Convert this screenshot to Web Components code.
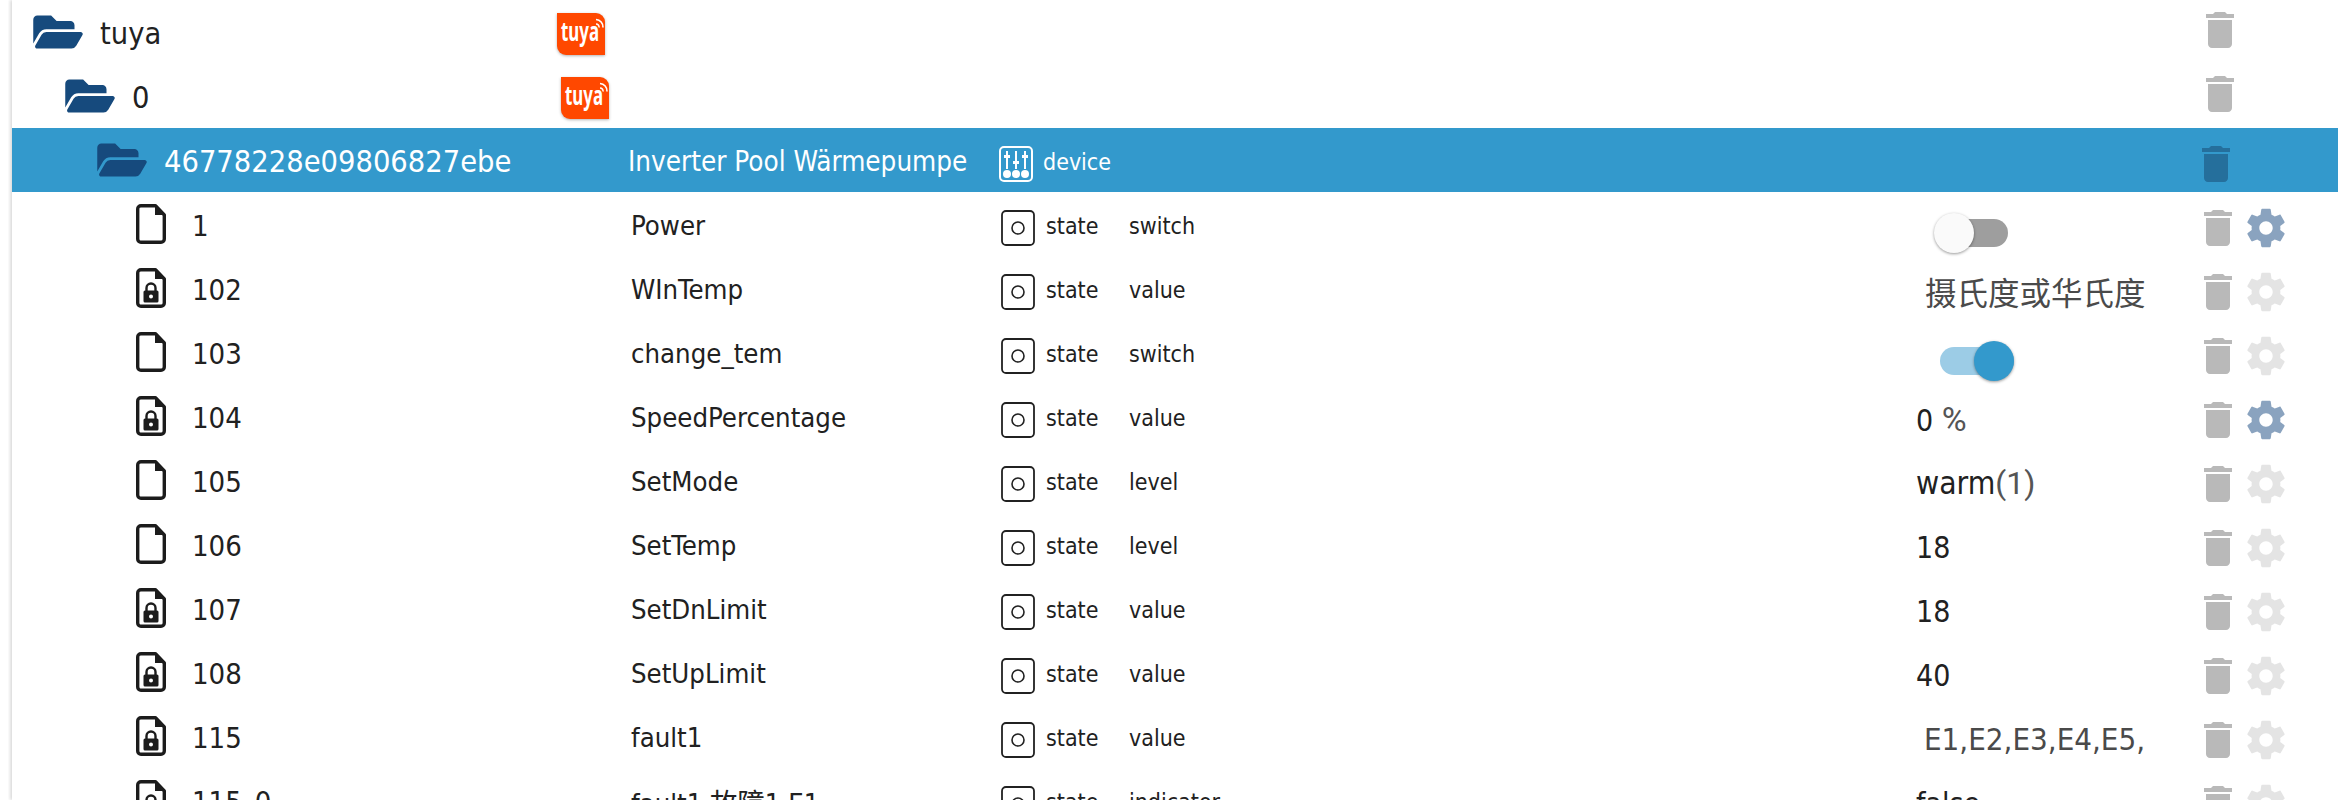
<!DOCTYPE html>
<html>
<head>
<meta charset="utf-8">
<title>objects</title>
<style>
  html, body { margin: 0; padding: 0; height: 800px; overflow: hidden; background: #fff; }
  body { font-family: "DejaVu Sans", "Noto Sans CJK SC", sans-serif; font-stretch: condensed; color: #212121; }
  .gray { color: #555; font-family: Roboto, sans-serif; font-stretch: normal; }
</style>
</head>
<body>

<object-tree>
  <tree-row level="0" kind="folder" label="tuya"><tuya-logo slot="name"></tuya-logo></tree-row>
  <tree-row level="1" kind="folder" label="0"><tuya-logo slot="name" style="margin-left:4px"></tuya-logo></tree-row>
  <tree-row level="2" kind="folder" label="46778228e09806827ebe" name="Inverter Pool Wärmepumpe" type="device" selected></tree-row>
  <tree-row kind="file" label="1" name="Power" type="state" role-name="switch" cog><toggle-switch slot="value"></toggle-switch></tree-row>
  <tree-row kind="lock" label="102" name="WInTemp" type="state" role-name="value" gear-off><span slot="value" style="margin-left:9px;color:#4a4a4a;font-size:31.5px;font-family:'Noto Sans CJK SC',sans-serif">摄氏度或华氏度</span></tree-row>
  <tree-row kind="file" label="103" name="change_tem" type="state" role-name="switch" gear-off><toggle-switch slot="value" on></toggle-switch></tree-row>
  <tree-row kind="lock" label="104" name="SpeedPercentage" type="state" role-name="value" cog><span slot="value">0 <span class="gray" style="font-size:34px">%</span></span></tree-row>
  <tree-row kind="file" label="105" name="SetMode" type="state" role-name="level" gear-off><span slot="value"><span style="font-size:31.5px">warm</span><span class="gray" style="font-size:32px">(1)</span></span></tree-row>
  <tree-row kind="file" label="106" name="SetTemp" type="state" role-name="level" gear-off><span slot="value">18</span></tree-row>
  <tree-row kind="lock" label="107" name="SetDnLimit" type="state" role-name="value" gear-off><span slot="value">18</span></tree-row>
  <tree-row kind="lock" label="108" name="SetUpLimit" type="state" role-name="value" gear-off><span slot="value">40</span></tree-row>
  <tree-row kind="lock" label="115" name="fault1" type="state" role-name="value" gear-off><span slot="value" style="display:block;margin-left:8px;width:220px;overflow:hidden;white-space:nowrap;color:#4a4a4a;font-size:31px">E1,E2,E3,E4,E5,</span></tree-row>
  <tree-row kind="lock" label="115_0" name="fault1 故障1 E1" type="state" role-name="indicator" gear-off><span slot="value">false</span></tree-row>
</object-tree>

<script>
// icon paths
const FILE_OUTLINE = '<path fill="none" stroke="#1c1c1c" stroke-width="3.400" stroke-linejoin="round" d="M5 1.700h14.500l8.800 9.300v24a3.300 3.300 0 0 1-3.300 3.300H5A3.300 3.300 0 0 1 1.700 35V5A3.300 3.300 0 0 1 5 1.700z"/><path fill="#1c1c1c" d="M19 2l9 9h-9z"/>';
const ICONS = {
  folder: '<svg width="50" height="44" viewBox="0 0 576 512"><path fill="#164a7d" d="M572.694 292.093L500.27 416.248A63.997 63.997 0 0 1 444.989 448H45.025c-18.523 0-30.064-20.093-20.731-36.093l72.424-124.155A64 64 0 0 1 152 256h399.964c18.523 0 30.064 20.093 20.73 36.093zM152 224h328v-48c0-26.51-21.49-48-48-48H272l-64-64H48C21.49 64 0 85.49 0 112v278.046l69.077-118.418C86.214 242.25 117.989 224 152 224z"/></svg>',
  file: `<svg width="30" height="40" viewBox="0 0 30 40">${FILE_OUTLINE}</svg>`,
  lock: `<svg width="30" height="40" viewBox="0 0 30 40">${FILE_OUTLINE}<path fill="none" stroke="#1c1c1c" stroke-width="2.400" d="M10.500 23v-3a4.500 4.500 0 0 1 9 0v3"/><path fill="#1c1c1c" fill-rule="evenodd" d="M9 22.500h12a1.500 1.500 0 0 1 1.500 1.500v9a1.500 1.500 0 0 1-1.500 1.500H9A1.500 1.500 0 0 1 7.500 33v-9A1.500 1.500 0 0 1 9 22.500zM15 26.500a2 2 0 1 0 0 4 2 2 0 0 0 0-4z"/></svg>`,
  state: '<svg width="34" height="36" viewBox="0 0 34 36"><rect x="1" y="1" width="32" height="34" rx="4" fill="none" stroke="#212121" stroke-width="1.800"/><circle cx="17" cy="18" r="6" fill="none" stroke="#212121" stroke-width="1.600"/></svg>',
  device: '<svg width="34" height="36" viewBox="0 0 34 36" fill="#fff" stroke="#fff"><rect x="1" y="1" width="32" height="34" rx="4" fill="none" stroke-width="2"/><path fill="none" stroke-width="2" d="M8 5v18M17 5v18M26 5v18"/><path stroke="none" d="M5 9h6v3H5zM14 15h6v3h-6zM23 9h6v3h-6z"/><g stroke="none"><circle cx="8" cy="28" r="4"/><circle cx="17" cy="28" r="4"/><circle cx="26" cy="28" r="4"/></g></svg>'
};

const TRASH = '<svg width="48" height="48" viewBox="0 0 24 24"><path fill="currentColor" d="M6 19c0 1.100.9 2 2 2h8c1.100 0 2-.9 2-2V7H6v12zM19 4h-3.500l-1-1h-5l-1 1H5v2h14V4z"/></svg>';
const GEAR = '<svg width="46" height="46" viewBox="0 0 24 24"><path fill="currentColor" d="M19.43 12.98c.04-.32.07-.64.07-.98s-.03-.66-.07-.98l2.110-1.650c.19-.15.24-.42.12-.64l-2-3.460c-.12-.22-.39-.3-.61-.22l-2.490 1c-.52-.4-1.080-.73-1.690-.98l-.38-2.650C14.460 2.180 14.250 2 14 2h-4c-.25 0-.46.18-.49.42l-.38 2.650c-.61.25-1.170.59-1.690.98l-2.490-1c-.23-.09-.49 0-.61.22l-2 3.460c-.13.22-.07.49.12.64l2.110 1.650c-.04.32-.07.65-.07.98s.03.66.07.98l-2.110 1.650c-.19.15-.24.42-.12.64l2 3.460c.12.22.39.3.61.22l2.490-1c.52.4 1.080.73 1.690.98l.38 2.650c.03.24.24.42.49.42h4c.25 0 .46-.18.49-.42l.38-2.650c.61-.25 1.170-.59 1.690-.98l2.490 1c.23.09.49 0 .61-.22l2-3.460c.12-.22.07-.49-.12-.64l-2.110-1.650zM12 15.500c-1.930 0-3.500-1.570-3.500-3.500s1.570-3.500 3.500-3.500 3.500 1.570 3.500 3.500-1.570 3.500-3.500 3.500z"/></svg>';

class ObjectTree extends HTMLElement {
  constructor() {
    super();
    this.attachShadow({ mode: 'open' });
    this.shadowRoot.innerHTML = `
      <style>
        :host { display: block; height: 800px; overflow: hidden; padding-left: 4px; margin-left: 8px; }
        .edge { box-shadow: -2px 0 3px rgba(0,0,0,.14); height: 800px; }
      </style>
      <div class="edge"><slot></slot></div>`;
  }
}
customElements.define('object-tree', ObjectTree);

class TuyaLogo extends HTMLElement {
  constructor() {
    super();
    this.attachShadow({ mode: 'open' });
    this.shadowRoot.innerHTML = `
      <style>
        :host { display: block; width: 48px; height: 42px; background: #ff4800; border-radius: 0 9px 0 9px; box-shadow: 0 1px 3px rgba(0,0,0,.3); }
        svg { display: block; }
        text { font-family: "Noto Sans", sans-serif; font-weight: 700; font-size: 26px; font-stretch: normal; fill: #fff; }
      </style>
      <svg width="48" height="42" viewBox="0 0 48 42">
        <text x="4" y="28" textLength="38" lengthAdjust="spacingAndGlyphs">tuya</text>
        <path fill="none" stroke="#fff" stroke-width="1.600" d="M39 11a3 3 0 0 1 3 3.500M39 6.500a7.500 7.500 0 0 1 7 8"/>
      </svg>`;
  }
}
customElements.define('tuya-logo', TuyaLogo);

class ToggleSwitch extends HTMLElement {
  constructor() {
    super();
    this.attachShadow({ mode: 'open' });
    this.shadowRoot.innerHTML = `
      <style>
        :host { display: block; width: 74px; height: 40px; margin: 12px 0 0 18px; position: relative; }
        :host([on]) { margin-left: 24px; }
        .track { position: absolute; left: 6px; right: 0; top: 6px; height: 28px; border-radius: 14px; background: #9e9e9e; }
        .thumb { position: absolute; left: 0; top: 0; width: 40px; height: 40px; border-radius: 50%; background: #fafafa;
                 box-shadow: 0 1px 3px rgba(0,0,0,.4); }
        :host([on]) .track { left: 0; background: #9ccce6; }
        :host([on]) .thumb { left: 34px; background: #3399cc; }
      </style>
      <div class="track"></div><div class="thumb"></div>`;
  }
}
customElements.define('toggle-switch', ToggleSwitch);

class TreeRow extends HTMLElement {
  constructor() {
    super();
    this.attachShadow({ mode: 'open' });
  }
  connectedCallback() {
    const kind = this.getAttribute('kind');
    const level = Number(this.getAttribute('level'));
    const type = this.getAttribute('type');
    const role = this.getAttribute('role-name') || '';
    const gear = this.hasAttribute('cog') ? 'on' : this.hasAttribute('gear-off') ? 'off' : '';
    this.shadowRoot.innerHTML = `
      <style>
        :host { display: grid; height: 64px; align-items: center;
                grid-template-columns: 545px 444px 915px 278px 1fr; font-size: 30px; white-space: nowrap; }
        :host([selected]) { background: #3399cc; color: #fff; }
        .id { display: flex; align-items: center; gap: 17px; padding-left: ${21 + level * 32}px; }
        .id .lbl { font-size: 30.5px; margin-top: 3px; }
        :host([kind=file]) .id, :host([kind=lock]) .id { padding-left: 124px; gap: 26px; }
        :host([kind=file]) .lbl, :host([kind=lock]) .lbl { font-size: 29px; margin-top: 4px; }
        .icon { display: block; line-height: 0; }
        .name { font-size: 27.3px; padding-left: 74px; margin-top: 2px; }
        :host([kind=folder]) .name { padding-left: 0; margin-top: 4px; }
        :host([selected]) .name { padding-left: 71px; font-size: 27.6px; margin-top: 2px; }
        .type { display: flex; align-items: center; font-size: 23px; margin-top: 8px; }
        :host([selected]) .type { margin-left: -2px; }
        .type .t { margin: -4px 0 0 11px; width: 83px; }
        .type .r { margin-top: -4px; }
        :host([selected]) .type .t { margin-left: 10px; }
        .value { margin-top: 6px; }
        .actions { display: flex; align-items: center; gap: 1px; color: #b9b9b9; margin-top: 8px; }
        :host([kind=folder]) .actions { margin: -4px 0 0 2px; }
        :host([selected]) .actions { margin: 8px 0 0 -2px; color: #256f9c; }
        .actions svg { display: block; }
        .gear-on { color: #8aa3bf; }
        .gear-off { color: #e4e4e4; }
      </style>
      <div class="id"><span class="icon">${ICONS[kind]}</span><span class="lbl">${this.getAttribute('label')}</span></div>
      <div class="name">${this.getAttribute('name') || ''}<slot name="name"></slot></div>
      <div class="type">${type ? ICONS[type] : ''}${type ? `<span class="t">${type}</span><span class="r">${role}</span>` : ''}</div>
      <div class="value"><slot name="value"></slot></div>
      <div class="actions">${TRASH}${gear ? `<span class="gear-${gear}">${GEAR}</span>` : ''}</div>`;
  }
}
customElements.define('tree-row', TreeRow);
</script>
</body>
</html>
